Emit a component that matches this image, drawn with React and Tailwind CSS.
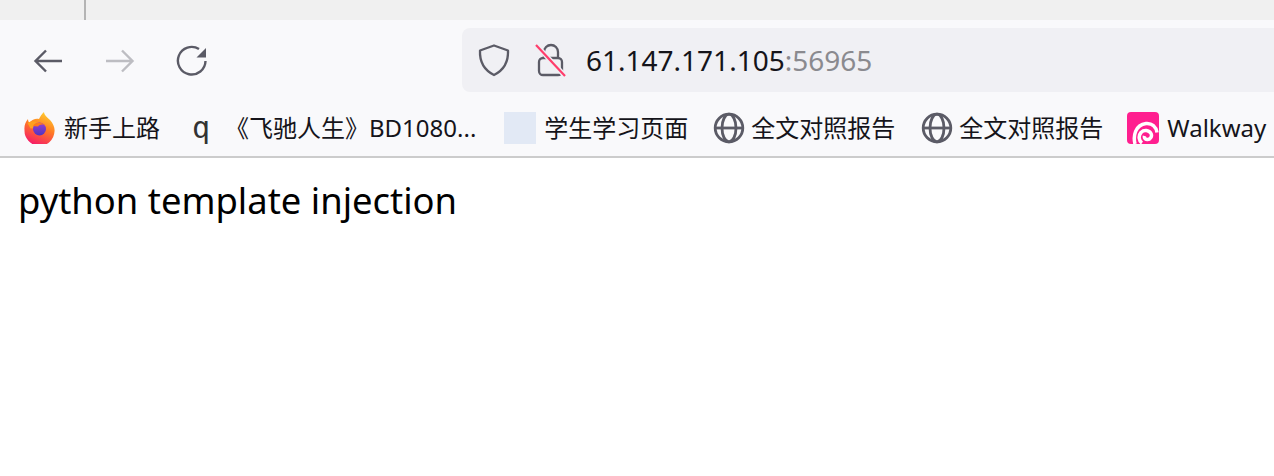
import React from 'react';

const sans = 'font-["Noto_Sans","Noto_Sans_CJK_SC",sans-serif]';

const Back = ({ className }) => (
  <svg width="32" height="32" viewBox="0 0 32 32" fill="none" stroke="currentColor" strokeWidth="2.4" className={className}>
    <path d="M30 16H3.500M14 5.500 3.500 16 14 26.500" />
  </svg>
);

const Forward = ({ className }) => (
  <svg width="32" height="32" viewBox="0 0 32 32" fill="none" stroke="currentColor" strokeWidth="2.4" className={className}>
    <path d="M2 16h26.500M18 5.500 28.500 16 18 26.500" />
  </svg>
);

const Reload = ({ className }) => (
  <svg width="32" height="32" viewBox="0 0 32 32" fill="none" className={className}>
    <path d="M23 4A13.800 13.800 0 1 0 29.500 16" stroke="currentColor" strokeWidth="2.4" />
    <path d="M30 3v9.500H20.500z" fill="currentColor" />
  </svg>
);

const Shield = () => (
  <svg width="32" height="34" viewBox="0 0 32 34" fill="none" stroke="#5b5b66" strokeWidth="2.3">
    <path d="M16 2.500 30 7.500C30.500 19 26 27 16 32 6 27 1.500 19 2 7.500z" strokeLinejoin="round" />
  </svg>
);

const BrokenLock = () => (
  <svg width="32" height="34" viewBox="0 0 32 34" fill="none">
    <path d="M9 15V9a7 7 0 0 1 14 0v6" stroke="#5b5b66" strokeWidth="2.3" />
    <rect x="4" y="15" width="23" height="17" rx="4" stroke="#5b5b66" strokeWidth="2.3" />
    <path d="M1 2 30 33" stroke="#f0f0f4" strokeWidth="5" />
    <path d="M1 2 30 33" stroke="#ff3e6c" strokeWidth="2.2" />
  </svg>
);

const FirefoxLogo = () => (
  <svg width="32" height="32" viewBox="0 0 32 32">
    <defs>
      <linearGradient id="fx" x1="0.7" y1="0" x2="0.3" y2="1">
        <stop offset="0" stopColor="#ffd02e" />
        <stop offset="0.45" stopColor="#ff7a25" />
        <stop offset="1" stopColor="#f5156c" />
      </linearGradient>
      <linearGradient id="fxb" x1="0.5" y1="0" x2="0.5" y2="1">
        <stop offset="0" stopColor="#9a3fd0" />
        <stop offset="1" stopColor="#4f35c0" />
      </linearGradient>
    </defs>
    <path d="M20 0c0 3 3 5 6 8 3.500 4 5 8 4.500 11.500A15 15 0 0 1 .5 18C0 14 1.500 9.500 4 7c0 1.500.5 3 1.500 3.500C8 7.500 12 6 15 7c1-2.500 3-5 5-7z" fill="url(#fx)" />
    <path d="M3.500 11c3-2 6-2.500 9.500-1l-3 3.500 3.500 2.500-7 .5z" fill="#ffa01f" />
    <circle cx="15.500" cy="17" r="6.500" fill="url(#fxb)" />
    <path d="M9 14c2-3.500 8-4.500 11.500-1-3-1-5.500 0-6.500 1.500z" fill="#ff7a1a" />
  </svg>
);

const Globe = () => (
  <svg width="32" height="32" viewBox="0 0 32 32" fill="none" stroke="#5b5b66" strokeWidth="2.8">
    <circle cx="16" cy="16" r="13.800" />
    <ellipse cx="16" cy="16" rx="7" ry="13.800" />
    <path d="M2 16h28" />
  </svg>
);

const WalkwayLogo = () => (
  <svg width="32" height="32" viewBox="0 0 32 32">
    <rect width="32" height="32" rx="4" fill="#ff1f8f" />
    <path d="M8 32C6 24 8 13 19 11.500c6-.5 10 3 11 9" fill="none" stroke="#fff" strokeWidth="3.500" />
    <path d="M15 31c-3-2-4-7-1-10.500 3-3 8-2.500 10 1 1.500 3-1 6.500-4 6-2 0-3-2-2.500-3.500" fill="none" stroke="#fff" strokeWidth="3.500" />
  </svg>
);

const Bookmark = ({ icon, label, className }) => (
  <div className={`flex items-center shrink-0 ${className}`}>
    {icon}
    <span className="whitespace-nowrap">{label}</span>
  </div>
);

export default function App() {
  return (
    <div className={`h-[476px] w-[1274px] overflow-hidden bg-white ${sans}`}>
      {/* tab strip */}
      <div className="h-5 bg-[#f0f0f0] pl-[84px]">
        <div className="h-5 w-0.5 bg-[#b4b4b4]"></div>
      </div>

      {/* toolbar */}
      <div className="flex h-[72px] items-center bg-[#f9f9fb] pl-8 pt-2">
        <Back className="mt-0.5 text-[#5b5b66]" />
        <Forward className="ml-10 mt-0.5 text-[#bdbdc2]" />
        <Reload className="ml-10 mt-0.5 text-[#5b5b66]" />
        <div className="ml-[254px] flex h-16 flex-1 items-center rounded-l-lg bg-[#f0f0f4] pl-4 text-[28px]">
          <Shield />
          <div className="ml-[25px]"><BrokenLock /></div>
          <div className="ml-[19px] whitespace-nowrap text-[#15141a]">
            61.147.171.105<span className="text-[#8a8a8f]">:56965</span>
          </div>
        </div>
      </div>

      {/* bookmarks */}
      <div className="flex h-[66px] items-center overflow-hidden border-b-2 border-[#cccccc] bg-[#f9f9fb] pl-6 pt-2 text-[24px] text-[#15141a]">
        <Bookmark className="gap-2" icon={<FirefoxLogo />} label="新手上路" />
        <div className="ml-[32px] flex items-center gap-[13px]">
          <span className='w-[20px] font-["DejaVu_Sans_Mono",monospace] text-[30px] leading-none text-[#333]'>q</span>
          <span className="whitespace-nowrap">《飞驰人生》BD1080...</span>
        </div>
        <Bookmark className="ml-7 gap-2" icon={<div className="h-8 w-8 bg-[#e2e9f5]"></div>} label="学生学习页面" />
        <Bookmark className="ml-[25px] gap-1.5" icon={<Globe />} label="全文对照报告" />
        <Bookmark className="ml-[26px] gap-1.5" icon={<Globe />} label="全文对照报告" />
        <Bookmark className="ml-6 gap-2" icon={<WalkwayLogo />} label="Walkway" />
      </div>

      {/* page */}
      <p className="px-[18px] pt-[17px] text-[36.4px] leading-[50px] text-black">python template injection</p>
    </div>
  );
}
